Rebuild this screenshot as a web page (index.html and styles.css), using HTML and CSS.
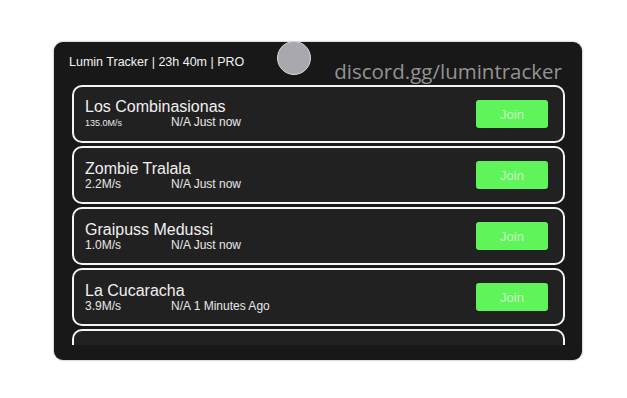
FILE: index.html
```
<!DOCTYPE html>
<html lang="en">
<head>
    <meta charset="UTF-8">
    <meta name="viewport" content="width=device-width, initial-scale=1.0">
    <title>Lumin Tracker</title>
    <link rel="stylesheet" href="styles.css">
</head>
<body>
    <div class="panel">
        <div class="avatar"></div>
        <div class="header">
            <div class="title">Lumin Tracker | 23h 40m | PRO</div>
            <div class="discord">discord.gg/lumintracker</div>
        </div>

        <div class="list">
            <div class="card">
                <div class="info">
                    <div class="name">Los Combinasionas</div>
                    <div class="stats">
                        <span class="speed small">135.0M/s</span>
                        <span class="status">N/A Just now</span>
                    </div>
                </div>
                <button class="btn-join">Join</button>
            </div>

            <div class="card">
                <div class="info">
                    <div class="name">Zombie Tralala</div>
                    <div class="stats">
                        <span class="speed">2.2M/s</span>
                        <span class="status">N/A Just now</span>
                    </div>
                </div>
                <button class="btn-join">Join</button>
            </div>

            <div class="card">
                <div class="info">
                    <div class="name">Graipuss Medussi</div>
                    <div class="stats">
                        <span class="speed">1.0M/s</span>
                        <span class="status">N/A Just now</span>
                    </div>
                </div>
                <button class="btn-join">Join</button>
            </div>

            <div class="card">
                <div class="info">
                    <div class="name">La Cucaracha</div>
                    <div class="stats">
                        <span class="speed">3.9M/s</span>
                        <span class="status">N/A 1 Minutes Ago</span>
                    </div>
                </div>
                <button class="btn-join">Join</button>
            </div>

            <div class="card">
                <div class="info">
                    <div class="name">&nbsp;</div>
                </div>
            </div>
        </div>
    </div>
</body>
</html>
```

FILE: styles.css
```
*{
    padding: 0;
    margin: 0;
    box-sizing: border-box;
}
body{
    width: 627px;
    height: 398px;
    overflow: hidden;
    background: #ffffff;
    font-family: 'Liberation Sans', Arial, sans-serif;
    padding: 42px 0 0 54px;
}
.panel{
    position: relative;
    width: 528px;
    height: 318px;
    background: #181818;
    border-radius: 9px;
    padding: 0 17px 15px 18px;
    box-shadow: 0 0 2px rgba(90, 20, 20, 0.6);
}
.avatar{
    position: absolute;
    left: 223px;
    top: -1px;
    width: 34px;
    height: 34px;
    border-radius: 50%;
    background: #a8a8ae;
    border: 1px solid #d6d6da;
}
.header{
    height: 43px;
    display: flex;
    justify-content: space-between;
    align-items: flex-start;
}
.title{
    margin: 13px 0 0 -3px;
    font-size: 12.5px;
    color: #f2f2f2;
}
.discord{
    margin: 15px 3px 0 0;
    font-family: 'Open Sans', sans-serif;
    font-size: 20.5px;
    color: #939393;
}
.list{
    height: 260px;
    overflow: hidden;
    display: flex;
    flex-direction: column;
    gap: 3px;
}
.card{
    flex-shrink: 0;
    height: 58px;
    border: 2px solid #f4f4f4;
    border-radius: 10px;
    background: #222121;
    display: flex;
    align-items: center;
    justify-content: space-between;
    padding: 0 15px 0 11px;
}
.name{
    font-size: 16px;
    color: #f0f0f0;
    line-height: 18px;
}
.stats{
    display: flex;
    align-items: baseline;
    font-size: 12px;
    color: #e8e8e8;
    line-height: 13px;
}
.speed{
    width: 86px;
}
.speed.small{
    font-size: 9px;
}
.btn-join{
    width: 72px;
    height: 28px;
    border: none;
    outline: none;
    border-radius: 3px;
    background: #5ff55a;
    color: #c8f7c0;
    font-family: 'Liberation Sans', Arial, sans-serif;
    font-size: 13px;
}
```
